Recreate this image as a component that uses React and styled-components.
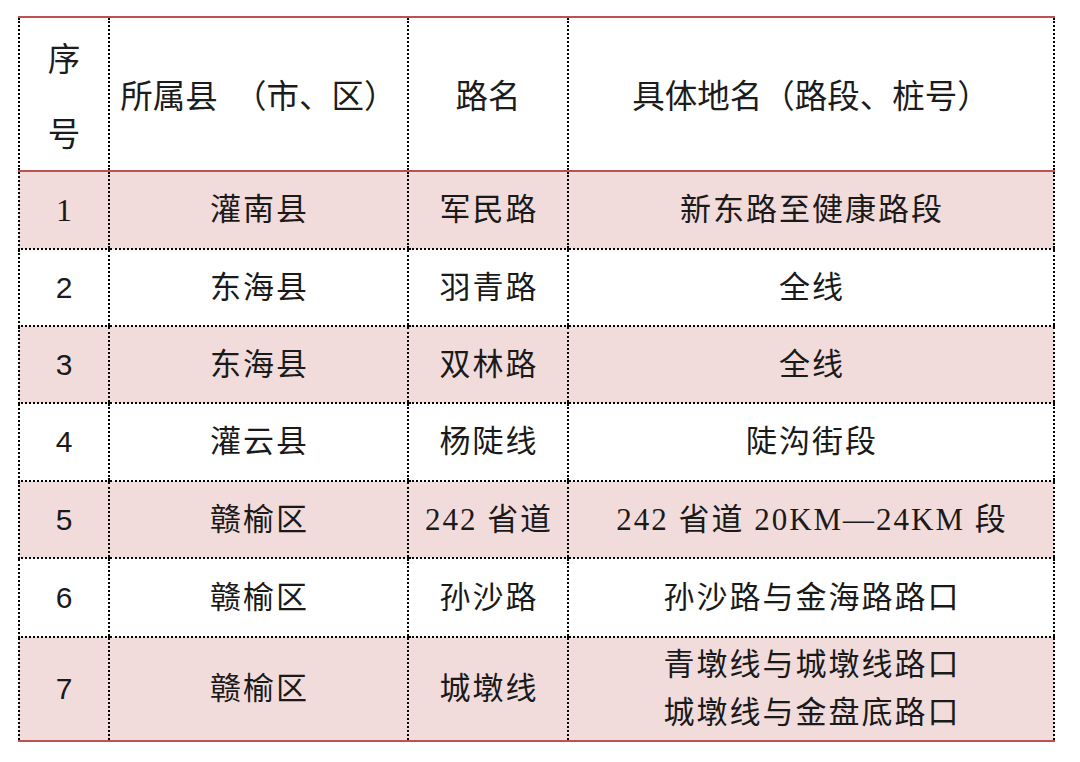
import React from "react";
import styled, { createGlobalStyle } from "styled-components";

const Global = createGlobalStyle`
  html, body { margin: 0; padding: 0; background: #ffffff; }
  body { font-family: "Noto Sans CJK SC", "Noto Sans", sans-serif; color: #1c1c1c; }
`;

const Page = styled.div`
  padding: 16px 0 0 18px;
`;

const Table = styled.table`
  width: 1035px;
  table-layout: fixed;
  border-collapse: collapse;
  border-top: 2px solid #c0504d;
  border-bottom: 2px solid #c0504d;
  border-left: 2px dotted #000;
  border-right: 2px dotted #000;
`;

const Row = styled.tr`
  height: ${(p) => p.$h}px;
  background: ${(p) => (p.$shaded ? "#f2dcdb" : "#ffffff")};
`;

const HeaderRow = styled.tr`
  height: 154px;
  background: #ffffff;
  border-bottom: 2px solid #c0504d;
`;

const HeaderCell = styled.th`
  font-family: "Noto Sans CJK SC", sans-serif;
  font-weight: 400;
  font-size: 32.5px;
  line-height: ${(p) => p.$lh || 40}px;
  color: #1c1c1c;
  text-align: center;
  vertical-align: middle;
  padding: 0;
  white-space: pre;
  border-left: 2px dotted #000;
  border-bottom: 2px solid #c0504d;
`;

const Cell = styled.td`
  font-family: "Liberation Serif", "Noto Sans CJK SC", serif;
  font-size: 31px;
  letter-spacing: 2px;
  padding: 0 0 0 2px;
  line-height: ${(p) => p.$lh || 40}px;
  color: #1a1a1a;
  text-align: center;
  vertical-align: middle;
  border-left: 2px dotted #000;
  border-bottom: 2px dotted #000;
  white-space: nowrap;
`;

const NumCell = styled(Cell)`
  font-family: ${(p) => (p.$serif ? '"Liberation Serif", serif' : '"Liberation Sans", sans-serif')};
  font-size: ${(p) => (p.$serif ? 32 : 30)}px;
  letter-spacing: 0;
  padding: 0;
`;

const rows = [
  { n: "1", serif: true, county: "灌南县", road: "军民路", place: ["新东路至健康路段"], h: 78 },
  { n: "2", county: "东海县", road: "羽青路", place: ["全线"], h: 77 },
  { n: "3", county: "东海县", road: "双林路", place: ["全线"], h: 77 },
  { n: "4", county: "灌云县", road: "杨陡线", place: ["陡沟街段"], h: 78 },
  { n: "5", county: "赣榆区", road: "242 省道", place: ["242 省道 20KM—24KM 段"], h: 77 },
  { n: "6", county: "赣榆区", road: "孙沙路", place: ["孙沙路与金海路路口"], h: 79 },
  { n: "7", county: "赣榆区", road: "城墩线", place: ["青墩线与城墩线路口", "城墩线与金盘底路口"], h: 104 },
];

export default function App() {
  return (
    <>
      <Global />
      <Page>
        <Table>
          <colgroup>
            <col style={{ width: 90 }} />
            <col style={{ width: 299 }} />
            <col style={{ width: 160 }} />
            <col style={{ width: 486 }} />
          </colgroup>
          <thead>
            <HeaderRow>
              <HeaderCell $lh={75}>
                序<br />号
              </HeaderCell>
              <HeaderCell>{"所属县\u2002（市、区）"}</HeaderCell>
              <HeaderCell>路名</HeaderCell>
              <HeaderCell>具体地名（路段、桩号）</HeaderCell>
            </HeaderRow>
          </thead>
          <tbody>
            {rows.map((r, i) => (
              <Row key={r.n} $h={r.h} $shaded={i % 2 === 0}>
                <NumCell $serif={r.serif}>{r.n}</NumCell>
                <Cell>{r.county}</Cell>
                <Cell>{r.road}</Cell>
                <Cell $lh={r.place.length > 1 ? 48 : 40}>
                  {r.place.map((p, j) => (
                    <React.Fragment key={j}>
                      {j > 0 && <br />}
                      {p}
                    </React.Fragment>
                  ))}
                </Cell>
              </Row>
            ))}
          </tbody>
        </Table>
      </Page>
    </>
  );
}
